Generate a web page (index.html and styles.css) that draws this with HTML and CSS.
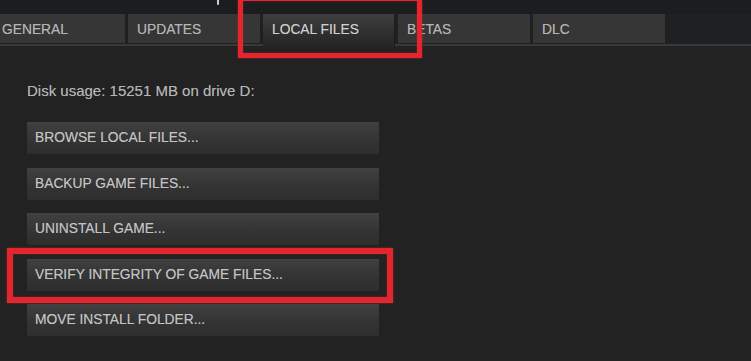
FILE: index.html
```html
<!DOCTYPE html>
<html lang="en">
<head>
<meta charset="utf-8">
<title>Local Files</title>
<link rel="stylesheet" href="styles.css">
</head>
<body>
<div class="window">
  <div class="titlebar"><span class="title-frag"></span></div>
  <nav class="tabbar">
    <div class="tab">GENERAL</div>
    <div class="tab">UPDATES</div>
    <div class="tab active">LOCAL FILES</div>
    <div class="tab">BETAS</div>
    <div class="tab">DLC</div>
  </nav>
  <main class="content">
    <p class="disk">Disk usage: 15251 MB on drive D:</p>
    <div class="actions">
      <div class="btn">BROWSE LOCAL FILES...</div>
      <div class="btn">BACKUP GAME FILES...</div>
      <div class="btn">UNINSTALL GAME...</div>
      <div class="btn">VERIFY INTEGRITY OF GAME FILES...</div>
      <div class="btn">MOVE INSTALL FOLDER...</div>
    </div>
  </main>
  <div class="mark mark-tab"></div>
  <div class="mark mark-verify"></div>
</div>
</body>
</html>
```

FILE: styles.css
```css
html, body {
  margin: 0;
  padding: 0;
  background: #222222;
  overflow: hidden;
}
body {
  font-family: "Liberation Sans", Arial, sans-serif;
  color: #bdbdbd;
}
.window {
  position: relative;
  width: 751px;
  height: 361px;
  overflow: hidden;
}
.titlebar {
  height: 14px;
  background: #1c1d1f;
  padding-left: 217px;
  box-sizing: border-box;
}
.title-frag {
  display: block;
  width: 2px;
  height: 5px;
  background: #cfcfcf;
  border-radius: 0 0 1px 1px;
}
.tabbar {
  display: flex;
  gap: 3px;
  height: 30px;
  margin-left: -7px;
  border-bottom: 2px solid #393939;
  background: #1f2021;
}
.tab {
  width: 132px;
  height: 29px;
  box-sizing: border-box;
  padding: 1px 0 0 9px;
  line-height: 29px;
  font-size: 13.8px;
  color: #b4b4b4;
  background: #363636;
  white-space: nowrap;
  text-shadow: 0 0 0.6px rgba(200, 200, 200, 0.5);
}
.tab.active {
  position: relative;
  z-index: 1;
  height: 35px;
  color: #cfcfcf;
  background: linear-gradient(#3e3e3e, #2b2b2b 70%, #232323);
  border-right: 1px solid #1d1d1d;
}
.content {
  padding: 36px 0 0 27px;
}
.disk {
  margin: 0 0 23px;
  font-size: 15px;
  line-height: 17px;
  color: #b5b5b5;
  text-shadow: 0 0 0.6px rgba(200, 200, 200, 0.5);
}
.actions {
  display: flex;
  flex-direction: column;
  gap: 13.5px;
}
.btn {
  width: 352px;
  height: 32px;
  box-sizing: border-box;
  padding-left: 8px;
  line-height: 32px;
  font-size: 13.8px;
  color: #c3c3c3;
  background: linear-gradient(#404040, #333333 60%, #2e2e2e);
  white-space: nowrap;
  text-shadow: 0 0 0.6px rgba(200, 200, 200, 0.5);
}
.mark {
  position: absolute;
  box-sizing: border-box;
  border-style: solid;
  border-color: #e3262d;
  box-shadow: 0 0 2px rgba(227, 38, 45, 0.6), inset 0 0 2px rgba(227, 38, 45, 0.5);
}
.mark-tab {
  left: 238px;
  top: -4px;
  width: 184px;
  height: 62px;
  border-width: 5px;
}
.mark-verify {
  left: 7px;
  top: 248px;
  width: 386px;
  height: 55px;
  border-width: 6px;
}
```
